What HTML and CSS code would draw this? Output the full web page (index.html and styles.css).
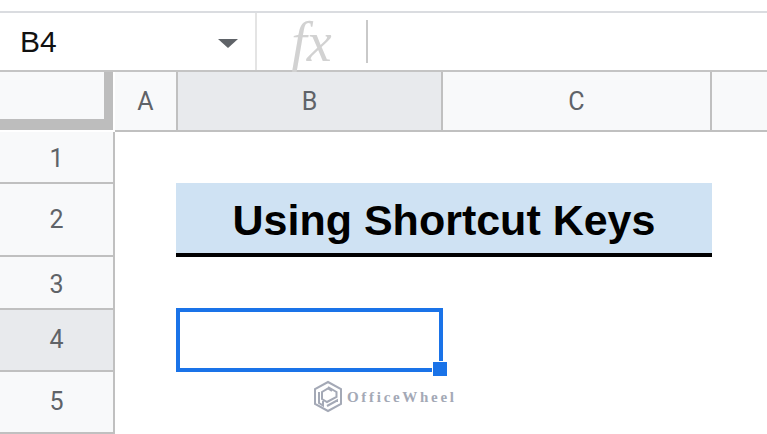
FILE: index.html
```html
<!DOCTYPE html>
<html lang="en">
<head>
  <meta charset="UTF-8">
  <title>Using Shortcut Keys</title>
  <link rel="stylesheet" href="styles.css">
</head>
<body>
  <div class="top-gap"></div>

  <div class="formula-bar">
    <div class="name-box">
      <span class="cell-ref">B4</span>
      <span class="arrow"></span>
    </div>
    <div class="fx-box"><span class="fx">fx</span></div>
  </div>

  <div class="sheet">
    <div class="corner"></div>
    <div class="col-head">A</div>
    <div class="col-head active">B</div>
    <div class="col-head">C</div>
    <div class="col-head last"></div>

    <div class="row-head r1">1</div>
    <div class="row-head r2">2</div>
    <div class="row-head r3">3</div>
    <div class="row-head r4 active">4</div>
    <div class="row-head r5">5</div>

    <div class="title">Using Shortcut Keys</div>

    <div class="selected">
      <span class="handle"></span>
    </div>

    <!-- watermark on top of the sheet -->
    <div class="watermark">
      <svg width="30" height="33" viewBox="0 0 30 33" fill="none" stroke="#a4a9b6" stroke-width="2">
        <path d="M15 2 L28 9 V24 L15 31 L2 24 V9 Z"/>
        <path d="M15 7 L23.500 12 V17 L14 22 L9 19 V12 L15 8.500 L19 11"/>
        <path d="M6 12 V23 L10 25.500 V21"/>
        <path d="M14 26 L24 20.500 V22"/>
      </svg>
      <span class="wm-text">OfficeWheel</span>
    </div>
  </div>
</body>
</html>
```

FILE: styles.css
```css
html, body {
  margin: 0;
  padding: 0;
  height: 434px;
  overflow: hidden;
  background: white;
  font-family: "Liberation Sans", Arial, sans-serif;
}
.top-gap {
  height: 11px;
}

/* formula bar */
.formula-bar {
  display: flex;
  height: 57px;
  border-top: 2px solid #dadce0;
  border-bottom: 2px solid #c4c4c4;
}
.name-box {
  width: 257px;
  flex: none;
  display: flex;
  align-items: center;
  padding-left: 20px;
  padding-right: 17px;
  box-sizing: border-box;
  border-right: 2px solid #e4e4e4;
}
.cell-ref {
  flex: 1;
  font-size: 30px;
  color: #111;
}
.arrow {
  width: 0;
  height: 0;
  margin-top: 4px;
  border-left: 10px solid transparent;
  border-right: 10px solid transparent;
  border-top: 9px solid #5f6368;
}
.fx-box {
  width: 111px;
  margin: 7px 0 7px 0;
  box-sizing: border-box;
  border-right: 2px solid #c9c9c9;
  display: flex;
  align-items: center;
  justify-content: center;
}
.fx {
  font-family: "Liberation Serif", serif;
  font-style: italic;
  font-size: 56px;
  line-height: 1;
  color: #d2d2d2;
}

/* sheet grid */
.sheet {
  position: relative;
  display: grid;
  grid-template-columns: 115px 63px 265px 269px 55px;
  grid-template-rows: 60px 52px 73px 53px 62px 62px;
}
.corner {
  grid-column: 1;
  grid-row: 1;
  background: #f8f9fa;
  border-right: 9px solid #bdbdbd;
  border-bottom: 11px solid #bdbdbd;
  margin-right: 2px;
  margin-bottom: 2px;
}
.col-head, .row-head {
  display: flex;
  align-items: center;
  justify-content: center;
  box-sizing: border-box;
  background: #f8f9fa;
  color: #5f6368;
  font-family: Roboto, sans-serif;
  font-size: 25px;
  border-bottom: 2px solid #c0c0c0;
}
.col-head {
  border-right: 2px solid #c0c0c0;
}
.col-head.last {
  border-right: none;
}
.row-head {
  grid-column: 1;
  border-right: 2px solid #c0c0c0;
}
.col-head.active, .row-head.active {
  background: #e8eaed;
}
.r1 { grid-row: 2; padding-top: 2px; }
.r2 { grid-row: 3; }
.r3 { grid-row: 4; padding-top: 3px; }
.r4 { grid-row: 5; padding-bottom: 2px; }
.r5 { grid-row: 6; padding-bottom: 2px; }

.title {
  grid-column: 3 / span 2;
  grid-row: 3;
  margin: -1px 0 0 -2px;
  background: #cfe2f3;
  border-bottom: 4px solid black;
  color: black;
  font-size: 43px;
  font-weight: bold;
  display: flex;
  align-items: center;
  justify-content: center;
  padding-top: 4px;
  box-sizing: border-box;
}
.selected {
  grid-column: 3;
  grid-row: 5;
  margin: -2px 0 0 -2px;
  border: 4px solid #1a73e8;
  position: relative;
}
.handle {
  position: absolute;
  right: -9px;
  bottom: -9px;
  width: 14px;
  height: 14px;
  background: #1a73e8;
  border: 1px solid white;
}

.watermark {
  position: absolute;
  left: 313px;
  top: 308px;
  display: flex;
  align-items: center;
  gap: 4px;
}
.wm-text {
  font-family: "Liberation Serif", serif;
  font-weight: bold;
  font-size: 15px;
  letter-spacing: 2.700px;
  color: #a4a9b6;
  padding-top: 2px;
}
```
